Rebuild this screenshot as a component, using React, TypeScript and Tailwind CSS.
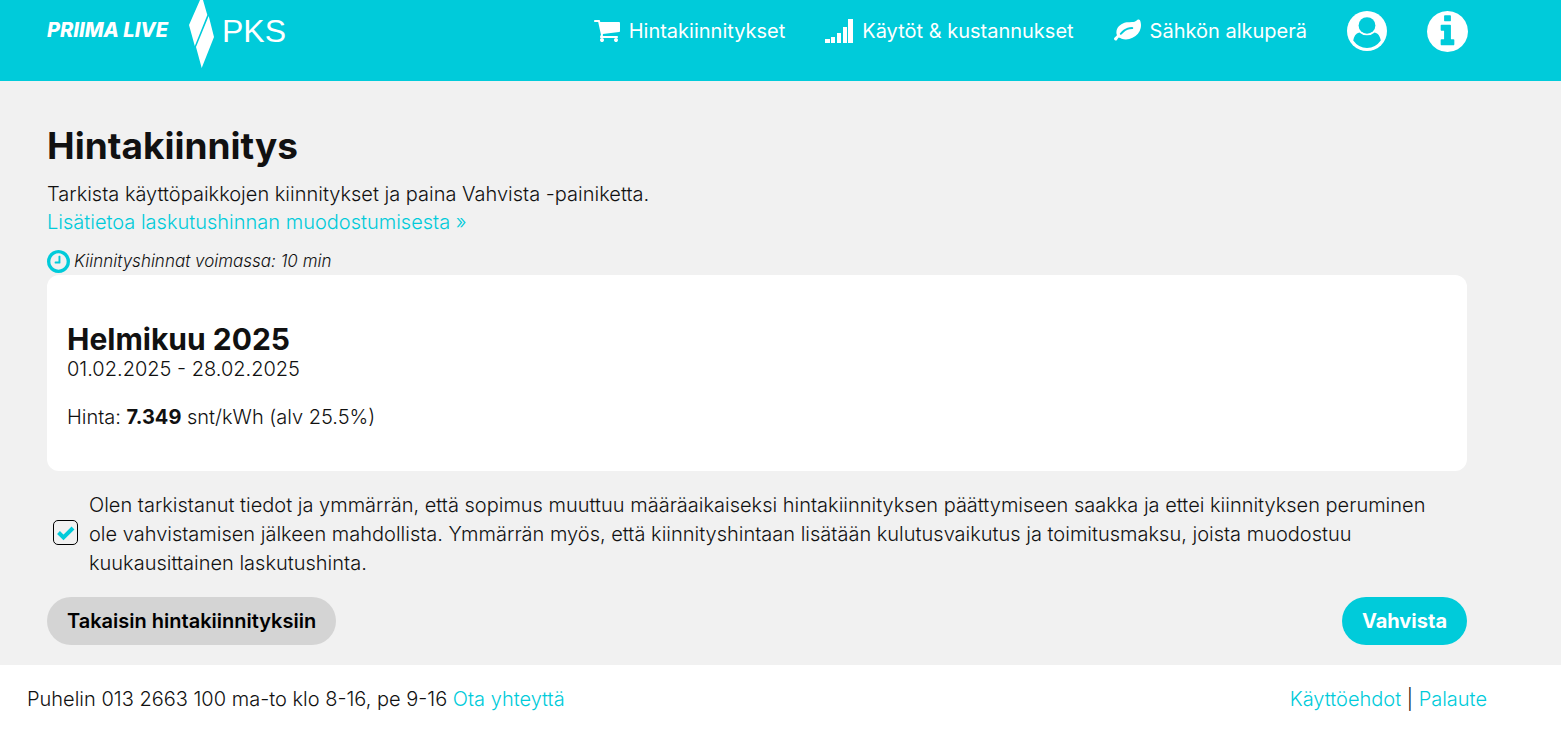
import { useState } from "react";
import type { ReactNode } from "react";

const NAV_ITEMS: { label: string; icon: ReactNode }[] = [
  { label: "Hintakiinnitykset", icon: <CartIcon /> },
  { label: "Käytöt & kustannukset", icon: <SignalIcon /> },
  { label: "Sähkön alkuperä", icon: <LeafIcon /> },
];

function CartIcon() {
  return (
    <svg viewBox="64 256 1664 1408" className="w-[26px] h-[22px]" fill="currentColor" aria-hidden="true">
      <path d="M704 1536q0 52-38 90t-90 38-90-38-38-90 38-90 90-38 90 38 38 90zm896 0q0 52-38 90t-90 38-90-38-38-90 38-90 90-38 90 38 38 90zm128-1088v512q0 24-16.5 42.5t-40.5 21.5l-1044 122q13 60 13 70 0 16-24 64h920q26 0 45 19t19 45-19 45-45 19h-1024q-26 0-45-19t-19-45q0-11 8-31.5t16-36 21.5-40 15.5-29.5l-177-823h-204q-26 0-45-19t-19-45 19-45 45-19h256q16 0 28.5 6.5t19.5 15.5 13 24.5 8 26 5.5 29.5 4.5 26h1201q26 0 45 19t19 45z" />
    </svg>
  );
}

function SignalIcon() {
  return (
    <svg viewBox="0 0 28 24" className="w-7 h-6" fill="currentColor" aria-hidden="true">
      <path d="M0 20h5v4H0zM6 18h4v6H6zM12 14h4v10h-4zM18 8h4v16h-4zM23 0h5v24h-5z" />
    </svg>
  );
}

function LeafIcon() {
  return (
    <svg viewBox="0 128 1792 1408" className="w-[27px] h-6 pb-[2px]" fill="currentColor" aria-hidden="true">
      <path d="M1280 704q0-26-19-45t-45-19q-172 0-318 49.5t-259.5 134-235.5 219.5q-19 21-19 45 0 26 19 45t45 19q24 0 45-19 27-24 74-71t67-66q137-124 268.5-176t313.5-52q26 0 45-19t19-45zm512-198q0 95-20 193-46 224-184.5 383t-357.5 268q-214 108-438 108-148 0-286-47-15-5-88-42t-96-37q-16 0-39.5 32t-45 70-52.5 70-60 32q-43 0-63.5-17.5t-45.5-59.5q-2-4-6-11t-5.5-10-3-9.5-1.5-13.5q0-35 31-73.5t68-65.5 68-56 31-48q0-4-14-38t-16-44q-9-51-9-104 0-115 43.5-220t119-184.5 170.5-139 204-95.5q55-18 145-25.5t179.5-9 178.5-6 163.5-24 113.5-56.5l29.5-29.5 29.5-28 27-20 36.5-16 43.5-4.5q39 0 70.5 46t47.5 112 24 124 8 96z" />
    </svg>
  );
}

function UserIcon() {
  return (
    <svg viewBox="0 0 41 41" className="size-10" aria-hidden="true">
      <circle cx="20.5" cy="20.5" r="20.5" fill="#fff" />
      <path d="M12.6 22c-3.6.9-5.6 4-6.2 8.300a17 17 0 0 0 28.200 0c-.6-4.300-2.600-7.400-6.200-8.300a12 12 0 0 1-15.800 0z" fill="#00cbda" />
      <ellipse cx="20.5" cy="14.8" rx="8.600" ry="8.500" fill="#00cbda" />
    </svg>
  );
}

function InfoIcon() {
  return (
    <svg viewBox="128 128 1536 1536" className="size-[41px]" fill="currentColor" aria-hidden="true">
      <path d="M1152 1376v-160q0-14-9-23t-23-9h-96v-512q0-14-9-23t-23-9h-320q-14 0-23 9t-9 23v160q0 14 9 23t23 9h96v320h-96q-14 0-23 9t-9 23v160q0 14 9 23t23 9h448q14 0 23-9t9-23zm-128-896v-160q0-14-9-23t-23-9h-192q-14 0-23 9t-9 23v160q0 14 9 23t23 9h192q14 0 23-9t9-23zm640 416q0 209-103 385.500t-279.500 279.500-385.500 103-385.500-103-279.500-279.500-103-385.500 103-385.500 279.500-279.500 385.500-103 385.500 103 279.500 279.500 103 385.500z" />
    </svg>
  );
}

function ClockIcon() {
  return (
    <svg viewBox="128 128 1536 1536" className="size-[23px] text-[#00cbda]" fill="currentColor" aria-hidden="true">
      <path d="M1024 544v448q0 14-9 23t-23 9h-320q-14 0-23-9t-9-23v-64q0-14 9-23t23-9h224v-352q0-14 9-23t23-9h64q14 0 23 9t9 23zm416 352q0-148-73-273t-198-198-273-73-273 73-198 198-73 273 73 273 198 198 273 73 273-73 198-198 73-273zm224 0q0 209-103 385.500t-279.500 279.500-385.500 103-385.500-103-279.500-279.500-103-385.500 103-385.500 279.500-279.500 385.500-103 385.500 103 279.500 279.500 103 385.500z" />
    </svg>
  );
}

function DiamondLogo() {
  return (
    <svg viewBox="0 0 25 68" className="w-[25px] h-[68px]" fill="currentColor" aria-hidden="true">
      <path d="M11 0h3l4.300 15L5.800 46 0 25zM19.700 16 25 37 12.700 68 7 47z" />
    </svg>
  );
}

function Header() {
  return (
    <header className="h-[81px] bg-[#00cbda] text-white pl-[47px] pr-[93px] flex items-start justify-between">
      <a href="#" className="flex items-start">
        <span className="w-[142px] pt-4 text-xl leading-7 font-extrabold italic whitespace-nowrap">PRIIMA LIVE</span>
        <DiamondLogo />
        <span className="pl-2 pt-3 text-[32px] leading-[38px] font-['Liberation_Sans',sans-serif]">PKS</span>
      </a>
      <nav className="h-[62px] flex items-center gap-10">
        {NAV_ITEMS.map(({ label, icon }) => (
          <a key={label} href="#" className="flex items-center gap-[9px] font-normal whitespace-nowrap">
            {icon} {label}
          </a>
        ))}
        <a href="#" aria-label="Oma tili"><UserIcon /></a>
        <a href="#" aria-label="Tietoa palvelusta"><InfoIcon /></a>
      </nav>
    </header>
  );
}

export default function App() {
  const [accepted, setAccepted] = useState(true);

  return (
    <div className="min-h-screen bg-white text-[#111] text-[20px] font-light font-['Inter',sans-serif]">
      <Header />
      <main className="bg-[#f1f1f1] pl-[47px] pr-[94px] pt-[43px] pb-5">
        <h1 className="text-[37px] leading-[44px] font-bold">Hintakiinnitys</h1>
        <p className="mt-3 leading-7">
          Tarkista käyttöpaikkojen kiinnitykset ja paina Vahvista -painiketta.
          <br />
          <a href="#" className="text-[#00cbda]">Lisätietoa laskutushinnan muodostumisesta »</a>
        </p>
        <p className="mt-3 flex items-center gap-1 text-[17px] leading-[27px] italic">
          <ClockIcon /> Kiinnityshinnat voimassa: 10 min
        </p>

        <section className="bg-white rounded-xl px-5 pt-12 pb-10">
          <h2 className="text-[30px] leading-8 font-bold">Helmikuu 2025</h2>
          <p className="leading-7">01.02.2025 - 28.02.2025</p>
          <p className="mt-5 leading-7">
            Hinta: <strong className="font-bold">7.349</strong> snt/kWh (alv 25.5%)
          </p>
        </section>

        <label className="mt-5 pl-[6px] pr-5 flex items-center gap-[11px] leading-[29px]">
          <span className="relative flex shrink-0 mb-1">
            <input
              type="checkbox"
              checked={accepted}
              onChange={(e) => setAccepted(e.target.checked)}
              className="appearance-none size-[25px] rounded-[5px] border border-black"
            />
            {accepted && (
              <svg viewBox="0 0 25 25" className="absolute inset-0 pointer-events-none" aria-hidden="true">
                <path d="m5.500 12.500 5 5 9.500-9.500" fill="none" stroke="#00cbda" strokeWidth="4" />
              </svg>
            )}
          </span>
          <span>
            Olen tarkistanut tiedot ja ymmärrän, että sopimus muuttuu määräaikaiseksi hintakiinnityksen päättymiseen saakka ja ettei kiinnityksen peruminen ole vahvistamisen jälkeen mahdollista. Ymmärrän myös, että kiinnityshintaan lisätään kulutusvaikutus ja toimitusmaksu, joista muodostuu kuukausittainen laskutushinta.
          </span>
        </label>

        <div className="mt-[19px] flex items-center justify-between">
          <button className="h-12 px-5 rounded-full bg-[#d4d4d4] text-black font-semibold">Takaisin hintakiinnityksiin</button>
          <button className="h-12 px-5 rounded-full bg-[#00cbda] text-white font-bold">Vahvista</button>
        </div>
      </main>
      <footer className="pl-[27px] pr-[74px] py-5 flex items-center justify-between leading-7">
        <p>
          Puhelin 013 2663 100 ma-to klo 8-16, pe 9-16 <a href="#" className="text-[#00cbda]">Ota yhteyttä</a>
        </p>
        <p>
          <a href="#" className="text-[#00cbda]">Käyttöehdot</a> | <a href="#" className="text-[#00cbda]">Palaute</a>
        </p>
      </footer>
    </div>
  );
}
